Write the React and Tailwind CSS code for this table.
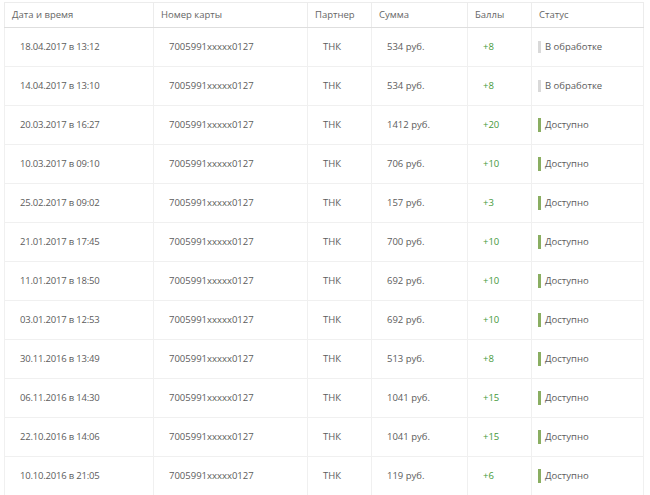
import React from "react";

const rows = [
  ["18.04.2017 в 13:12", "534 руб.", "+8", "pending"],
  ["14.04.2017 в 13:10", "534 руб.", "+8", "pending"],
  ["20.03.2017 в 16:27", "1412 руб.", "+20", "ok"],
  ["10.03.2017 в 09:10", "706 руб.", "+10", "ok"],
  ["25.02.2017 в 09:02", "157 руб.", "+3", "ok"],
  ["21.01.2017 в 17:45", "700 руб.", "+10", "ok"],
  ["11.01.2017 в 18:50", "692 руб.", "+10", "ok"],
  ["03.01.2017 в 12:53", "692 руб.", "+10", "ok"],
  ["30.11.2016 в 13:49", "513 руб.", "+8", "ok"],
  ["06.11.2016 в 14:30", "1041 руб.", "+15", "ok"],
  ["22.10.2016 в 14:06", "1041 руб.", "+15", "ok"],
  ["10.10.2016 в 21:05", "119 руб.", "+6", "ok"],
];

export default function App() {
  return (
    <div className="w-[650px] h-[495px] overflow-hidden bg-white pt-[2px] pl-[4px] font-['Open_Sans',sans-serif] text-[9.5px] text-[#5c5c5c]">
      <table className="border-collapse table-fixed w-[639px]">
        <colgroup>
          <col className="w-[149px]" />
          <col className="w-[154px]" />
          <col className="w-[64px]" />
          <col className="w-[96px]" />
          <col className="w-[64px]" />
          <col className="w-[112px]" />
        </colgroup>
        <thead>
          <tr className="h-[25px] text-left text-[#666]">
            {["Дата и время", "Номер карты", "Партнер", "Сумма", "Баллы", "Статус"].map((h) => (
              <th key={h} className="font-normal px-[7px] border border-[#ececec] border-b-[#dedede]">
                {h}
              </th>
            ))}
          </tr>
        </thead>
        <tbody>
          {rows.map(([date, sum, pts, st]) => (
            <tr key={date} className="h-[39px]">
              <td className="px-[15px] border border-[#f0f0f0] tracking-[-0.2px]">{date}</td>
              <td className="px-[15px] border border-[#f0f0f0]">7005991xxxxx0127</td>
              <td className="px-[15px] border border-[#f0f0f0]">ТНК</td>
              <td className="px-[15px] border border-[#f0f0f0]">{sum}</td>
              <td className="px-[15px] border border-[#f0f0f0] text-[#46993a]">{pts}</td>
              <td className="px-[6px] border border-[#f0f0f0]">
                <div className="flex items-center gap-[4px]">
                  <span
                    className={
                      st === "ok"
                        ? "w-[3px] h-[14px] bg-[#8aae62]"
                        : "w-[3px] h-[12px] bg-[#d9d9d9]"
                    }
                  />
                  <span>{st === "ok" ? "Доступно" : "В обработке"}</span>
                </div>
              </td>
            </tr>
          ))}
        </tbody>
      </table>
    </div>
  );
}
